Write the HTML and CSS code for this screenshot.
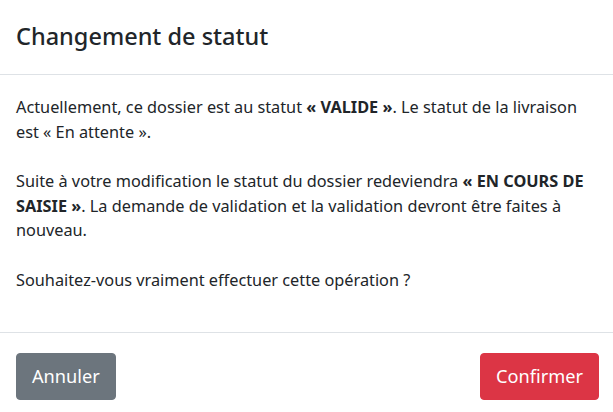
FILE: index.html
```html
<!DOCTYPE html>
<html lang="fr"><head><meta charset="utf-8"><link rel="stylesheet" href="styles.css"></head>
<body>
<div class="modal">
  <div class="modal-header">
    <h4 class="modal-title">Changement de statut</h4>
  </div>
  <div class="modal-body">
    <p>Actuellement, ce dossier est au statut <b>« VALIDE »</b>. Le statut de la livraison est « En attente ».</p>
    <p>Suite à votre modification le statut du dossier redeviendra <b>« EN COURS DE SAISIE »</b>. La demande de validation et la validation devront être faites à nouveau.</p>
    <p>Souhaitez-vous vraiment effectuer cette opération ?</p>
  </div>
  <div class="modal-footer">
    <button class="btn btn-secondary">Annuler</button>
    <button class="btn btn-danger">Confirmer</button>
  </div>
</div>
</body></html>
```
FILE: styles.css
```css
html,body{margin:0;padding:0;background:#fff}
body{font-family:"Noto Sans","Open Sans",sans-serif;color:#212529;font-size:16.3px;line-height:24.5px}
.modal{width:613px;height:412px;display:flex;flex-direction:column}
.modal-header{padding:18px 16px 20px;border-bottom:1px solid #dee2e6}
.modal-title{margin:0;font-size:23.5px;line-height:36px;font-weight:500}
.modal-body{box-sizing:border-box;padding:20px 16px 0 16px;height:257px}
.modal-body p{margin:0 0 25px}
.modal-body b{font-weight:700}
.modal-footer{border-top:1px solid #dee2e6;padding:20px 14px 12px 16px;display:flex;justify-content:space-between;align-items:flex-start}
.btn{font-family:inherit;font-size:18.2px;line-height:29px;padding:8px 15px;border:1px solid transparent;border-radius:4px;color:#fff;cursor:pointer}
.btn-secondary{background:#6c757d;border-color:#6c757d}
.btn-danger{background:#dc3545;border-color:#dc3545}
```
